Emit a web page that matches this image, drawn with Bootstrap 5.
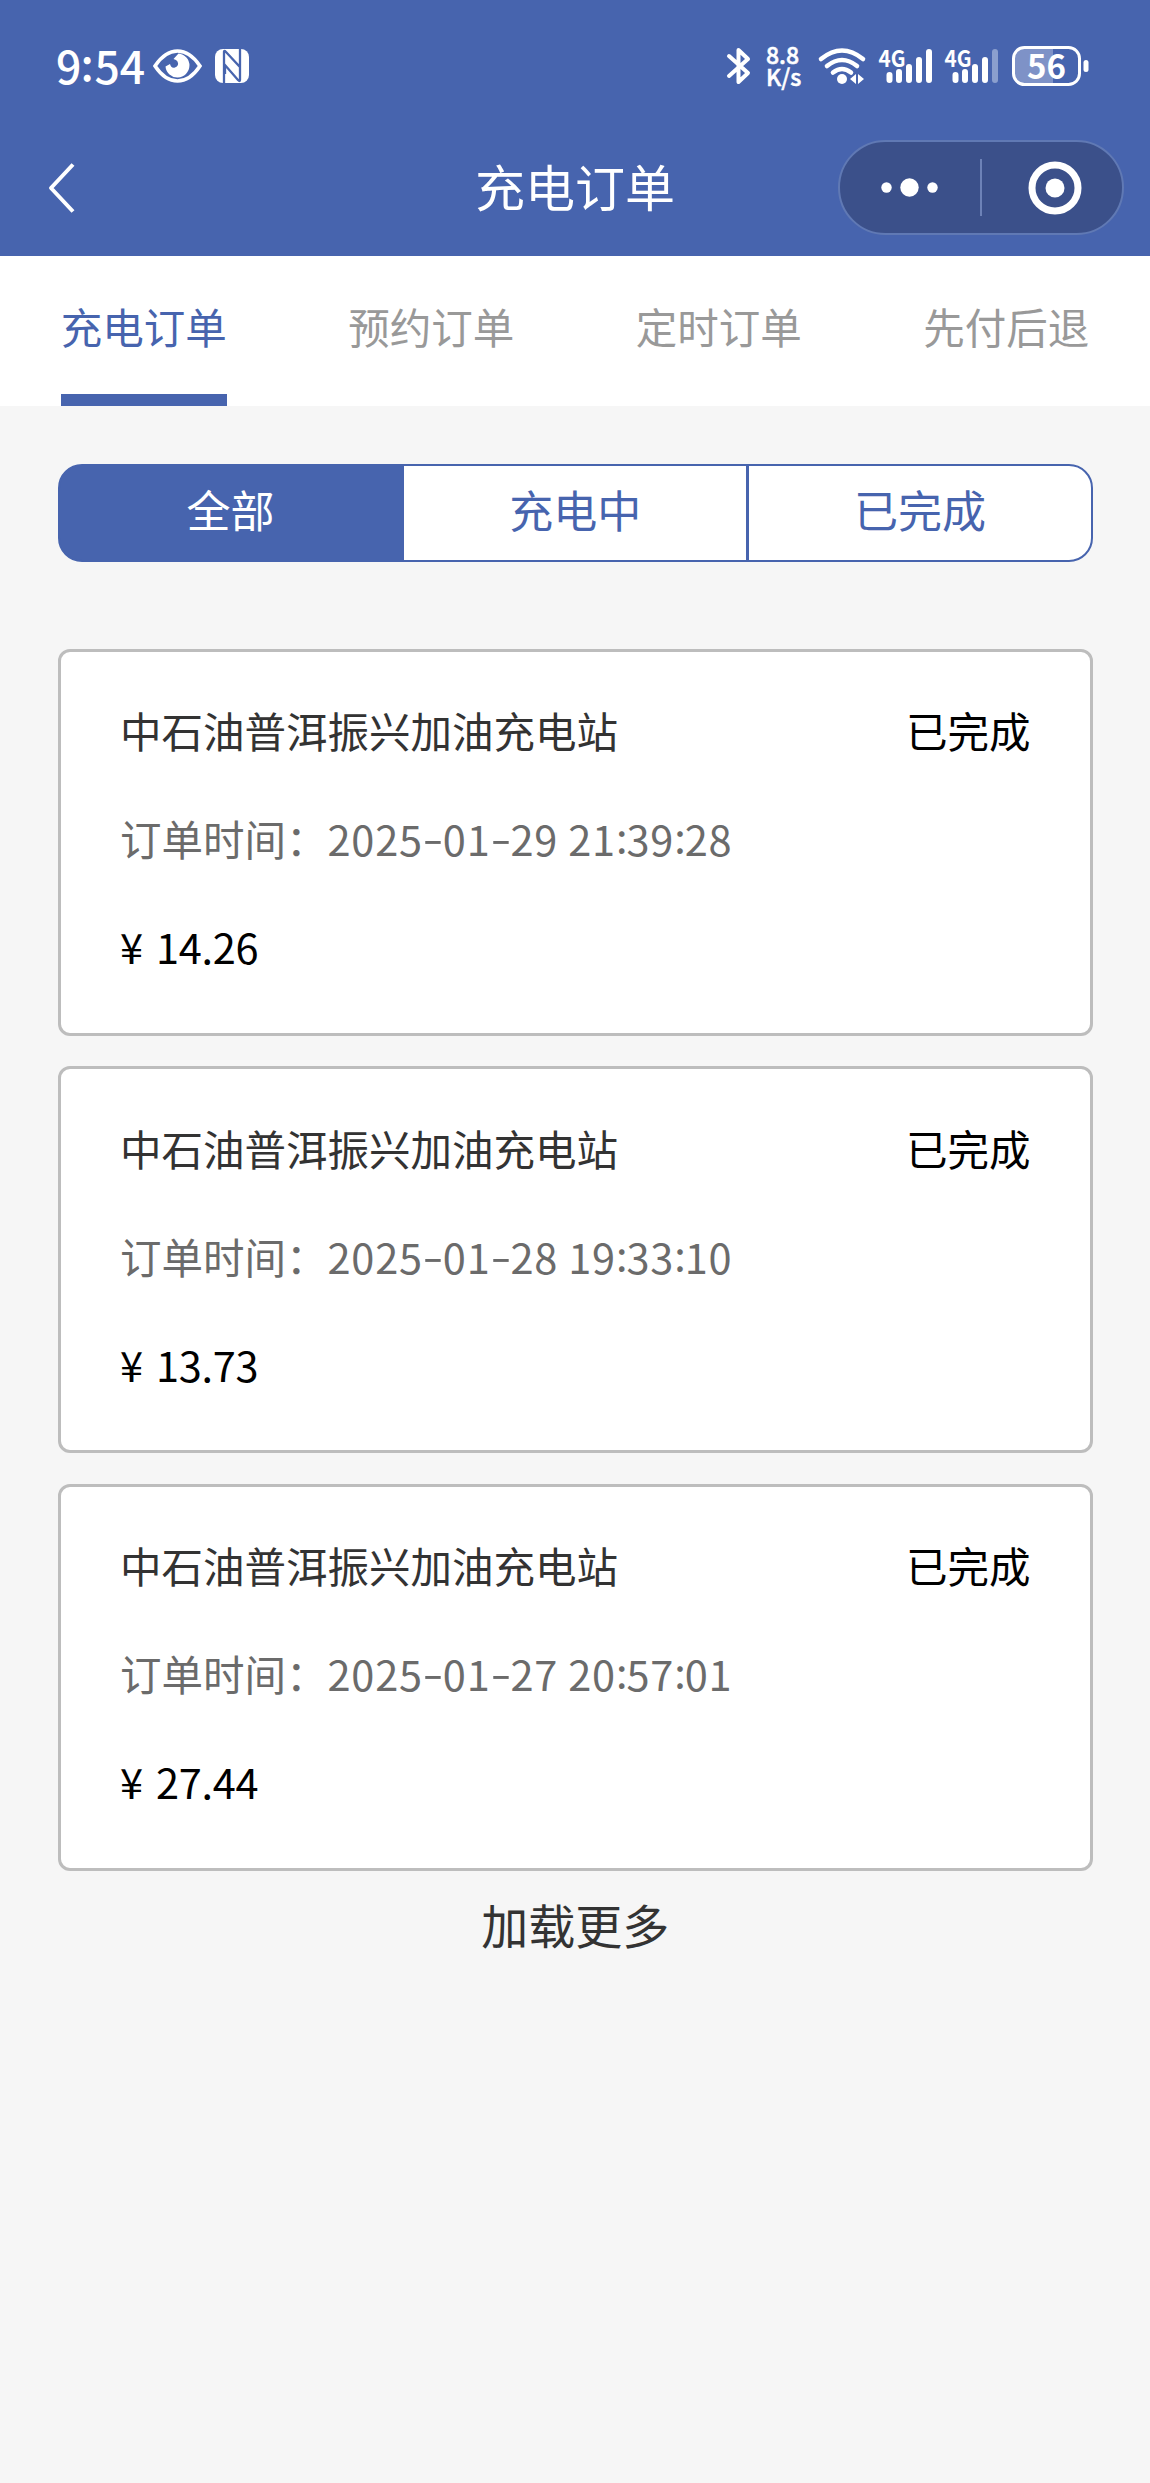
<!DOCTYPE html>
<html lang="zh-CN">
<head>
<meta charset="utf-8">
<meta name="viewport" content="width=device-width, initial-scale=1">
<title>充电订单</title>
<link href="https://cdn.jsdelivr.net/npm/bootstrap@5.3.0/dist/css/bootstrap.min.css" rel="stylesheet">
<style>
:root{--brand:#4764ae}
body{font-family:"Noto Sans CJK SC",sans-serif;background:#f6f6f6;color:#333;min-height:2483px;font-size:41.5px}
svg{display:block;flex:none;overflow:visible}
.app-head{background:var(--brand);height:256px}
.status-row{height:119px;padding:13px 61px 0 56px;line-height:1}
.clock{font-size:44.5px;font-weight:500;width:97px;white-space:nowrap;padding-bottom:2px}
.clock i{font-style:normal;display:inline-block;width:13px;text-align:center;transform:translate(-1px,-3px)}
.speed{font-size:23px;line-height:22px;width:36px;margin-left:14px;font-weight:500;padding-bottom:3px;-webkit-text-stroke:.5px #fff}
.nfc{margin-left:13px}
.wifi{margin-left:16px}
.sim-one{margin-left:13px}
.sim-two{margin-left:12px}
.battery{margin-left:13px}
.title-row{height:137px;padding:0 26px}
.title-row h1{font-size:50px;line-height:74px;font-weight:400;padding-bottom:5px}
.side{width:286px;padding-left:20px}
.capsule{width:286px;height:95px;background:#3b508a;border:2px solid #6079b4}
.tabs-row{height:150px}
.tabs-row .nav-link{padding:0;color:#999;line-height:140px;height:150px;border-radius:0}
.tabs-row .nav-link span{display:inline-block;height:149.5px}
.tabs-row .nav-link.active{color:var(--brand)}
.tabs-row .nav-link.active span{border-bottom:12px solid var(--brand)}
.page-body{padding:57.5px 57px 0 57.5px}
.seg{height:98.5px;width:100%}
.seg .btn{--bs-btn-color:var(--brand);--bs-btn-bg:#fff;--bs-btn-border-color:var(--brand);--bs-btn-active-bg:var(--brand);--bs-btn-active-border-color:var(--brand);--bs-btn-active-color:#fff;--bs-btn-border-radius:24px;--bs-btn-border-width:2px;--bs-btn-padding-y:0;font-size:44px;line-height:80px;padding-bottom:8px;flex:1 1 0}
.order-list{margin-top:86.5px;gap:30.5px}
.order{border:3px solid #bdbdbd;border-radius:12px;height:387px;padding:24.5px 59.5px 0}
.order .line{height:108px;line-height:108px;white-space:nowrap}
.order .state,.order .price{color:#000}
.order .when{color:#6b6b6b}
.price span{margin-left:4px;letter-spacing:-.3px}
.when>span{letter-spacing:.8px}
.when i,.when b{letter-spacing:0;font-style:normal;font-weight:400;display:inline-block;text-align:center}
.when i{width:20px;transform:translateY(-2px) scaleX(1.45)}
.when b{width:10.5px;transform:translateY(-3px)}
.more{font-size:47px;line-height:70px;margin-top:18px}
</style>
</head>
<body>
<header class="app-head text-white">
  <div class="status-row d-flex align-items-center">
    <div class="clock">9<i>:</i>54</div>
    <svg width="49" height="36" viewBox="0 0 49 36"><path d="M2 18Q12 3 24.500 3T47 18Q37 33 24.500 33T2 18Z" fill="none" stroke="#fff" stroke-width="3.600"/><path d="M25.500 5.500a12 12 0 1 1-13 13l4.500-2.500q1 4.500 5 3.500 4.500-2 2.500-6-1-2-4-2.500z" fill="#fff"/></svg>
    <svg class="nfc" width="34" height="36" viewBox="0 0 34 36"><rect y="1" width="34" height="34" rx="8" fill="#fff"/><path d="M9 35V4q0-2 2 0L25 19V10M25 1v31q0 2-2 0L10 17v9" fill="none" stroke="#4764ae" stroke-width="2.300"/></svg>
    <svg class="ms-auto" width="26" height="38" viewBox="0 0 26 38"><path d="M3 9l19 17-9.500 9V3L22 12 3 29" fill="none" stroke="#fff" stroke-width="4" stroke-linejoin="round" stroke-linecap="round"/></svg>
    <div class="speed"><div>8.8</div><div>K/s</div></div>
    <svg class="wifi" width="48" height="38" viewBox="0 0 48 38"><g fill="none" stroke="#fff" stroke-width="4.600" stroke-linecap="round"><path d="M3 12Q24-5 45 12"/><path d="M9 19Q24 7 39 19"/><path d="M15 25.500Q24 18.500 33 25.500"/></g><circle cx="24" cy="32" r="5" fill="#fff"/><path d="M38 27v10l-6-5zM40 27v10l6-5z" fill="#fff"/></svg>
    <svg class="sim-one" width="54" height="38" viewBox="0 0 54 38"><text x="-.5" y="19.500" font-size="23" font-weight="700" textLength="27" lengthAdjust="spacingAndGlyphs" fill="#fff">4G</text><path d="M10.500 28v5M20 25v8M30 20v13M40 13v20M50 5v28" stroke="#fff" stroke-width="6" stroke-linecap="round"/></svg>
    <svg class="sim-two" width="54" height="38" viewBox="0 0 54 38"><text x="-.5" y="19.500" font-size="23" font-weight="700" textLength="27" lengthAdjust="spacingAndGlyphs" fill="#fff">4G</text><path d="M10.500 28v5M20 25v8M30 20v13M40 13v20" stroke="#fff" stroke-width="6" stroke-linecap="round"/><path d="M50 5v28" stroke="#8b9fce" stroke-width="6" stroke-linecap="round"/></svg>
    <svg class="battery" width="77" height="40" viewBox="0 0 77 40"><path d="M12 2h29v36H12Q2 38 2 28V12Q2 2 12 2Z" fill="#7e92c7"/><rect x="1.500" y="1.500" width="66" height="37" rx="11" fill="none" stroke="#fff" stroke-width="3"/><rect x="71.500" y="14" width="5" height="12" rx="2.500" fill="#fff"/><text x="34.500" y="32.500" font-size="33" font-weight="700" text-anchor="middle" fill="#fff">56</text></svg>
  </div>
  <div class="title-row d-flex align-items-center justify-content-between">
    <div class="side"><svg width="30" height="50" viewBox="0 0 30 50"><path d="M27 1.500L5 25l22 23.500" fill="none" stroke="#fff" stroke-width="4" stroke-linejoin="round"/></svg></div>
    <h1 class="m-0">充电订单</h1>
    <div class="capsule rounded-pill"><svg width="282" height="91" viewBox="0 0 282 91"><g fill="#fff"><circle cx="46.500" cy="45.500" r="5.200"/><circle cx="69.500" cy="45.500" r="9.200"/><circle cx="92.500" cy="45.500" r="5.200"/><circle cx="215" cy="46" r="9.500"/></g><path d="M141 17v57" stroke="#6d82b7" stroke-width="2"/><circle cx="215" cy="46" r="23" fill="none" stroke="#fff" stroke-width="7"/></svg></div>
  </div>
</header>
<nav class="tabs-row nav nav-justified bg-white flex-nowrap">
  <a class="nav-link active" href="#"><span>充电订单</span></a>
  <a class="nav-link" href="#"><span>预约订单</span></a>
  <a class="nav-link" href="#"><span>定时订单</span></a>
  <a class="nav-link" href="#"><span>先付后退</span></a>
</nav>
<main class="page-body">
  <div class="btn-group seg">
    <button class="btn active" type="button">全部</button>
    <button class="btn" type="button">充电中</button>
    <button class="btn" type="button">已完成</button>
  </div>
  <div class="order-list d-flex flex-column">
    <section class="order bg-white">
      <div class="line d-flex justify-content-between"><span>中石油普洱振兴加油充电站</span><span class="state">已完成</span></div>
      <div class="line when">订单时间：<span>2025<i>-</i>01<i>-</i>29 21<b>:</b>39<b>:</b>28</span></div>
      <div class="line price">¥<span> 14.26</span></div>
    </section>
    <section class="order bg-white">
      <div class="line d-flex justify-content-between"><span>中石油普洱振兴加油充电站</span><span class="state">已完成</span></div>
      <div class="line when">订单时间：<span>2025<i>-</i>01<i>-</i>28 19<b>:</b>33<b>:</b>10</span></div>
      <div class="line price">¥<span> 13.73</span></div>
    </section>
    <section class="order bg-white">
      <div class="line d-flex justify-content-between"><span>中石油普洱振兴加油充电站</span><span class="state">已完成</span></div>
      <div class="line when">订单时间：<span>2025<i>-</i>01<i>-</i>27 20<b>:</b>57<b>:</b>01</span></div>
      <div class="line price">¥<span> 27.44</span></div>
    </section>
  </div>
  <div class="more text-center">加载更多</div>
</main>
<script src="https://cdn.jsdelivr.net/npm/bootstrap@5.3.0/dist/js/bootstrap.bundle.min.js"></script>
</body>
</html>
